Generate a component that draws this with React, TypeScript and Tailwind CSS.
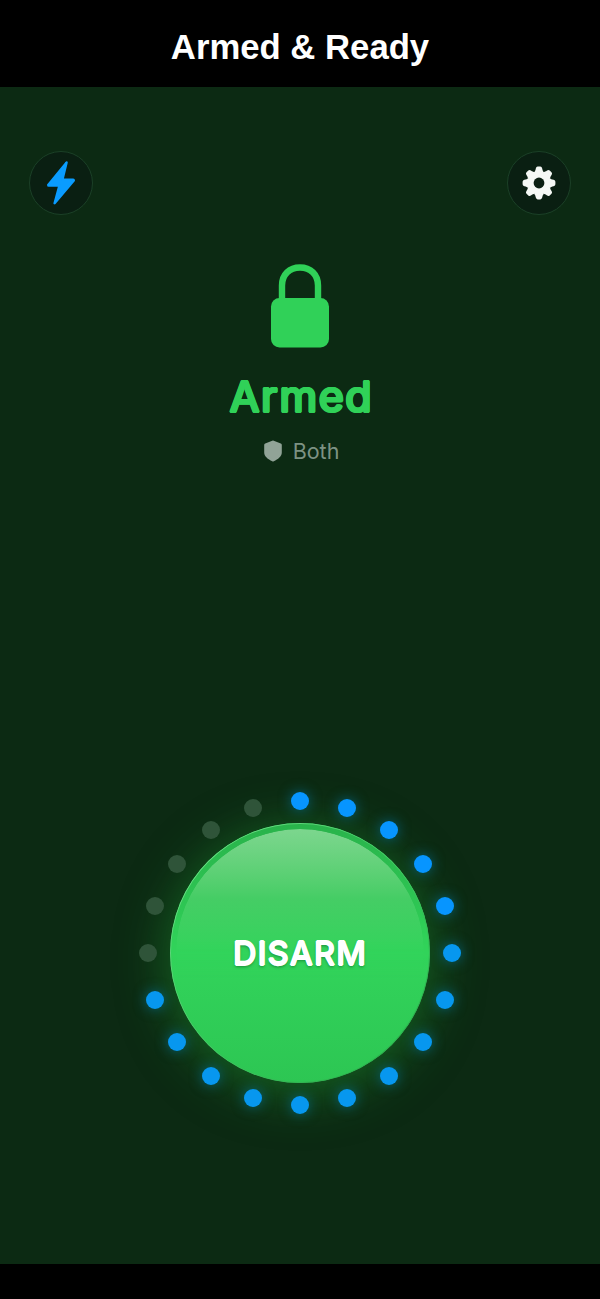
import type { ReactNode } from 'react'

const DOT_COUNT = 20
const ACTIVE_DOTS = 15
const RING_RADIUS = 152

// Lit dots run clockwise from the top
const dots = Array.from({ length: DOT_COUNT }, (_, i) => {
  const angle = (i / DOT_COUNT) * Math.PI * 2
  return {
    id: i,
    left: 161 + Math.sin(angle) * RING_RADIUS - 9,
    top: 161 - Math.cos(angle) * RING_RADIUS - 9,
    active: i < ACTIVE_DOTS,
    low: Math.cos(angle) < 0.1,
  }
})

function RoundButton({ label, children }: { label: string; children: ReactNode }) {
  return (
    <button
      aria-label={label}
      className="flex h-16 w-16 items-center justify-center rounded-full border border-[#1b4027] bg-[#0a1f12]"
    >
      {children}
    </button>
  )
}

function BoltIcon() {
  return (
    <svg viewBox="0 0 32 48" className="h-12 w-8" fill="#0a9cff" stroke="#0a9cff" strokeWidth="2.4" strokeLinejoin="round">
      <path d="M21.6 3.4 3.2 25.9Q3.2 26.6 3.8 26.6L14.4 26.6 9.6 44.2 28.8 21.5Q28.8 20.8 28.2 20.8L17.4 20.8Z" />
    </svg>
  )
}

function GearIcon() {
  return (
    <svg viewBox="-18 -18 36 36" className="h-9 w-9" fill="#f5f8f5">
      <circle r="11.8" />
      {[0, 45, 90, 135, 180, 225, 270, 315].map((deg) => (
        <path
          key={deg}
          transform={`rotate(${deg})`}
          d="M-5-10.7C-4-11.6-3.5-12.8-3.2-14.6Q-2.8-16.4-1.3-16.4L1.3-16.4Q2.8-16.4 3.2-14.6C3.5-12.8 4-11.6 5-10.7Z"
        />
      ))}
      <circle r="5.4" fill="#0a1f12" />
    </svg>
  )
}

function LockIcon() {
  return (
    <svg viewBox="0 0 60 86" className="h-[86px] w-[60px]">
      <path d="M12 38V22.5C12 11.5 19.5 4.5 30 4.5S48 11.5 48 22.5V38" fill="none" stroke="#30d158" strokeWidth="6.4" />
      <rect x="1" y="35" width="58" height="49.5" rx="8.5" fill="#30d158" />
    </svg>
  )
}

function ShieldIcon() {
  return (
    <svg viewBox="0 0 18 22" className="h-[22px] w-[18px]" fill="#91a397">
      <path d="M8.2.7Q9 .3 9.8.7L16.8 3.4Q17.8 3.8 17.8 4.9V12.5C17.8 16.5 14 19.2 9.8 21.3Q9 21.7 8.2 21.3C4 19.2.2 16.5.2 12.5V4.9Q.2 3.8 1.2 3.4Z" />
    </svg>
  )
}

export default function App() {
  return (
    <div className="flex h-[1299px] w-[600px] flex-col overflow-hidden bg-black font-['Inter',sans-serif]">
      <header className="flex h-[87px] shrink-0 items-center justify-center pb-[7px]">
        <h1 className="pt-3.5 font-['Liberation_Sans',sans-serif] text-[34.7px] leading-none font-bold text-white">
          Armed &amp; Ready
        </h1>
      </header>

      <main className="flex h-[1177px] shrink-0 flex-col items-center bg-[#0c2a13]">
        <div className="flex w-full justify-between px-[29px] pt-16">
          <RoundButton label="Quick action">
            <BoltIcon />
          </RoundButton>
          <RoundButton label="Settings">
            <GearIcon />
          </RoundButton>
        </div>

        {/* Status */}
        <section className="mt-12 flex flex-col items-center">
          <LockIcon />
          <h2 className="mt-[21px] ml-[3px] text-[43px] leading-[52px] font-normal tracking-[1.6px] text-[#30d158] [text-shadow:1.5px_0_#30d158,-1.5px_0_#30d158,0_1.4px_#30d158,0_-1.4px_#30d158,1px_1px_#30d158,-1px_1px_#30d158,1px_-1px_#30d158,-1px_-1px_#30d158]">
            Armed
          </h2>
          <div className="mt-4 ml-[3px] flex h-[26px] items-center gap-[11px]">
            <ShieldIcon />
            <span className="text-[21.5px] leading-[26px] text-[#7d9283]">Both</span>
          </div>
        </section>

        {/* Arm / disarm control */}
        <section className="relative mt-[328px] flex h-[322px] w-[322px] items-center justify-center">
          <button className="relative flex h-[260px] w-[260px] items-center justify-center rounded-full bg-linear-to-b from-[#32d45b] from-50% to-[#2dc653] shadow-[0_8px_48px_4px_rgba(30,150,50,0.5)]">
            <span className="absolute inset-0 rounded-full bg-linear-to-b from-[#29b34b] to-[#30d158] to-50% [mask-image:linear-gradient(#000_35%,transparent_55%)]" />
            <span className="absolute inset-[6px] rounded-full bg-linear-to-b from-[#7cd68e] via-[#45cd65] via-28% to-[#32d45b] to-50% [mask-image:linear-gradient(#000_45%,transparent_60%)]" />
            <span className="absolute inset-0 rounded-full bg-linear-to-br from-[#7be093] via-[#45c564] to-[#24a544] p-[1.3px] [mask:linear-gradient(#000_0_0)_content-box_exclude,linear-gradient(#000_0_0)]" />
            <span className="relative mt-0.5 text-[32.5px] leading-10 font-medium tracking-[1.2px] text-white [text-shadow:0.8px_0_#fff,-0.8px_0_#fff,0_0.8px_#fff,0_-0.8px_#fff,0_2px_3px_rgba(0,70,20,0.5)]">
              DISARM
            </span>
          </button>
          {dots.map((dot) => (
            <span
              key={dot.id}
              className={
                dot.active
                  ? dot.low
                    ? 'absolute h-[18px] w-[18px] rounded-full bg-[#0797ef] shadow-[0_0_13px_rgba(0,140,210,0.55)]'
                    : 'absolute h-[18px] w-[18px] rounded-full bg-[#0795ff] shadow-[0_0_13px_rgba(0,140,210,0.55)]'
                  : 'absolute h-[18px] w-[18px] rounded-full bg-[#2f5439]'
              }
              style={{ left: dot.left, top: dot.top }}
            />
          ))}
        </section>
      </main>
    </div>
  )
}
